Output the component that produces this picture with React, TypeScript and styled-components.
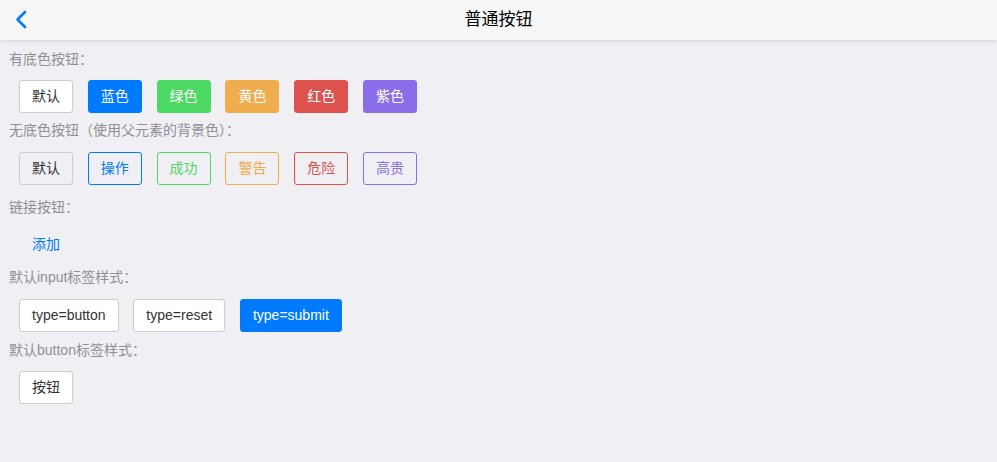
import React from "react";
import styled, { createGlobalStyle } from "styled-components";

const GlobalStyle = createGlobalStyle`
  html, body {
    margin: 0;
    padding: 0;
    background: #efeff4;
    font-family: "Liberation Sans", "Noto Sans CJK SC", sans-serif;
    -webkit-font-smoothing: antialiased;
  }
`;

const Page = styled.div`
  width: 997px;
  min-height: 462px;
  background: #efeff4;
  display: flex;
  flex-direction: column;
`;

const Header = styled.header`
  position: relative;
  height: 40px;
  background: #f7f7f7;
  box-shadow: 0 1px 4px rgba(0, 0, 0, 0.12);
  display: flex;
  align-items: center;
  justify-content: center;
  z-index: 1;
`;

const BackButton = styled.span`
  position: absolute;
  left: 14px;
  top: 10px;
  width: 16px;
  height: 20px;
  display: flex;
`;

const HeaderTitle = styled.h1`
  margin: 0;
  font-size: 17px;
  font-weight: 400;
  color: #000;
  line-height: 20px;
`;

const Content = styled.main`
  display: flex;
  flex-direction: column;
  padding: 0 9px;
`;

const SectionTitle = styled.h5<{ $top: number }>`
  margin: ${(p) => p.$top}px 0 0;
  font-size: 14px;
  font-weight: 400;
  line-height: 20px;
  color: #8f8f94;
`;

const ButtonRow = styled.div<{ $top: number }>`
  display: flex;
  gap: 14.8px;
  margin-top: ${(p) => p.$top}px;
  padding-left: 10px;
`;

type Tone = "default" | "primary" | "success" | "warning" | "danger" | "royal";

const tones: Record<Tone, { color: string; border: string }> = {
  default: { color: "#fff", border: "#ccc" },
  primary: { color: "#007aff", border: "#007aff" },
  success: { color: "#4cd964", border: "#4cd964" },
  warning: { color: "#f0ad4e", border: "#f0ad4e" },
  danger: { color: "#dd524d", border: "#dd524d" },
  royal: { color: "#8a6de9", border: "#8a6de9" },
};

const Btn = styled.button<{ $tone: Tone; $outlined?: boolean; $link?: boolean }>`
  box-sizing: border-box;
  height: 33px;
  padding: 6px 12px;
  border-radius: 3px;
  border: 1px solid
    ${(p) => (p.$link ? "transparent" : tones[p.$tone].border)};
  background: ${(p) =>
    p.$link || p.$outlined
      ? "transparent"
      : tones[p.$tone].color};
  color: ${(p) => {
    if (p.$link) return "#007aff";
    if (p.$outlined) return p.$tone === "default" ? "#333" : tones[p.$tone].color;
    return p.$tone === "default" ? "#333" : "#fff";
  }};
  font-family: "Liberation Sans", "Noto Sans CJK SC", sans-serif;
  font-size: 14px;
  line-height: 19px;
  white-space: nowrap;
  cursor: pointer;
`;

const InputBtn = styled.input<{ $primary?: boolean }>`
  box-sizing: border-box;
  height: 33px;
  padding: 6px 12px;
  border-radius: 3px;
  border: 1px solid ${(p) => (p.$primary ? "#007aff" : "#ccc")};
  background: ${(p) => (p.$primary ? "#007aff" : "#fff")};
  color: ${(p) => (p.$primary ? "#fff" : "#333")};
  font-family: "Liberation Sans", "Noto Sans CJK SC", sans-serif;
  font-size: 14px;
  line-height: 19px;
  cursor: pointer;
`;

const filled: [Tone, string][] = [
  ["default", "默认"],
  ["primary", "蓝色"],
  ["success", "绿色"],
  ["warning", "黄色"],
  ["danger", "红色"],
  ["royal", "紫色"],
];

const outlined: [Tone, string][] = [
  ["default", "默认"],
  ["primary", "操作"],
  ["success", "成功"],
  ["warning", "警告"],
  ["danger", "危险"],
  ["royal", "高贵"],
];

export default function App() {
  return (
    <Page>
      <GlobalStyle />
      <Header>
        <BackButton>
          <svg width="16" height="20" viewBox="0 0 16 20">
            <polyline
              points="11,2 3.5,9.5 11,17"
              fill="none"
              stroke="#007aff"
              strokeWidth="2.6"
              strokeLinecap="round"
              strokeLinejoin="round"
            />
          </svg>
        </BackButton>
        <HeaderTitle>普通按钮</HeaderTitle>
      </Header>
      <Content>
        <SectionTitle $top={9}>有底色按钮：</SectionTitle>
        <ButtonRow $top={11}>
          {filled.map(([t, label]) => (
            <Btn key={label} $tone={t}>
              {label}
            </Btn>
          ))}
        </ButtonRow>

        <SectionTitle $top={7}>无底色按钮（使用父元素的背景色）：</SectionTitle>
        <ButtonRow $top={12}>
          {outlined.map(([t, label]) => (
            <Btn key={label} $tone={t} $outlined>
              {label}
            </Btn>
          ))}
        </ButtonRow>

        <SectionTitle $top={12}>链接按钮：</SectionTitle>
        <ButtonRow $top={11}>
          <Btn $tone="primary" $link>
            添加
          </Btn>
        </ButtonRow>

        <SectionTitle $top={6}>默认input标签样式：</SectionTitle>
        <ButtonRow $top={12}>
          <InputBtn type="button" value="type=button" />
          <InputBtn type="reset" value="type=reset" />
          <InputBtn type="submit" value="type=submit" $primary />
        </ButtonRow>

        <SectionTitle $top={8}>默认button标签样式：</SectionTitle>
        <ButtonRow $top={11}>
          <Btn $tone="default">按钮</Btn>
        </ButtonRow>
      </Content>
    </Page>
  );
}
